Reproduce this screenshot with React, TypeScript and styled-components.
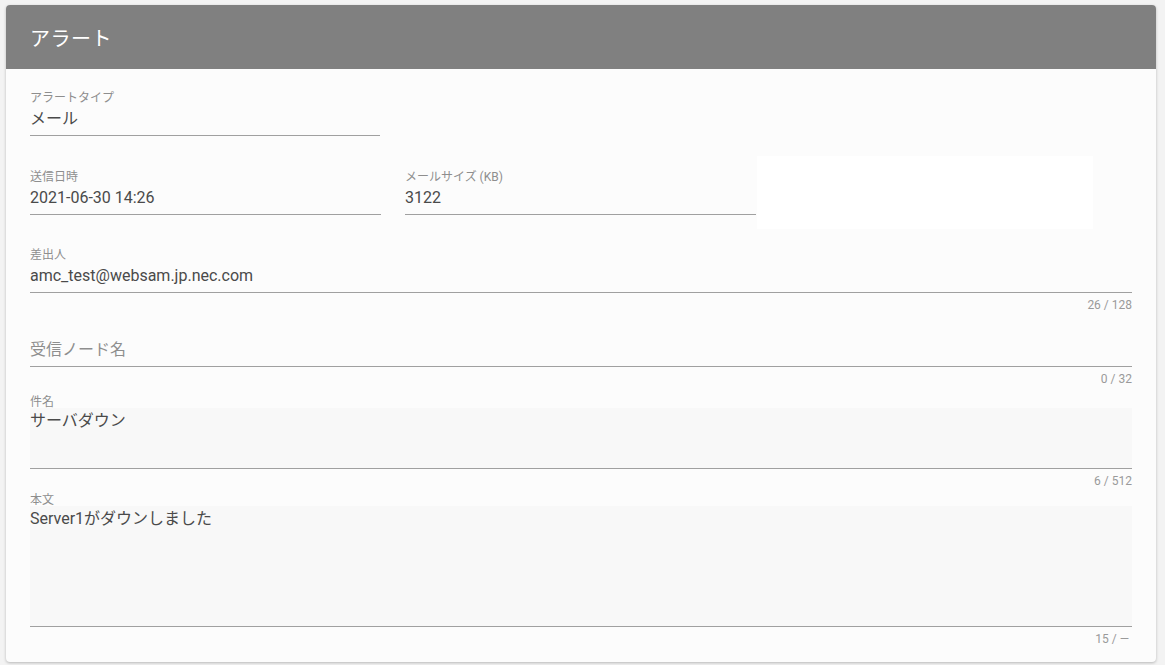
import styled, { createGlobalStyle } from "styled-components"

const GlobalStyle = createGlobalStyle`
    html, body {
        margin: 0;
        padding: 0;
        background: #f3f3f3;
        font-family: Roboto, "Noto Sans CJK JP", "Noto Sans", sans-serif;
    }
`

const Page = styled.div`
    padding: 5px 9px 3px 6px;
`

const Card = styled.section`
    background: #fcfcfc;
    border-radius: 4px;
    box-shadow: 0 1px 3px rgba(0, 0, 0, 0.25);
    overflow: hidden;
`

const Header = styled.header`
    height: 64px;
    background: #808080;
    color: #ffffff;
    display: flex;
    align-items: center;
    padding: 0 24px;
    font-size: 20px;
    font-weight: 400;
    letter-spacing: 0.5px;
`

const Body = styled.div`
    padding: 21px 24px 16px;
    display: flex;
    flex-direction: column;
`

const Row = styled.div`
    display: grid;
    grid-template-columns: 351px 351px 313px;
    column-gap: 24px;
    align-items: start;
`

const Field = styled.div<{ $width?: number; $hint: number }>`
    display: flex;
    flex-direction: column;
    width: ${p => (p.$width ? `${p.$width}px` : "auto")};
    padding-bottom: ${p => p.$hint}px;
`

const Label = styled.label<{ $area?: boolean }>`
    font-size: 12px;
    line-height: 16px;
    height: 16px;
    color: #8e8e8e;
    margin-bottom: ${p => (p.$area ? "-2px" : "0")};
    position: relative;
    z-index: 1;
`

const Control = styled.div<{ $rows?: number; $empty?: boolean }>`
    font-size: 16px;
    line-height: 24px;
    padding: 1px 0 4px;
    height: ${p => (p.$rows ? `${p.$rows}px` : "24px")};
    color: ${p => (p.$empty ? "#8e8e8e" : "#4a4a4a")};
    background: ${p => (p.$rows ? "#f8f8f8" : "transparent")};
    border-bottom: 1px solid #a0a0a0;
    white-space: nowrap;
`

const Counter = styled.div<{ $inset?: number }>`
    align-self: flex-end;
    font-size: 12px;
    line-height: 14px;
    color: #9a9a9a;
    margin-top: 5px;
    margin-right: ${p => p.$inset ?? 0}px;
`

// white patch sitting right of the size field
const Blank = styled.div`
    margin: -13px 0 0 -23px;
    height: 73px;
    background: #ffffff;
`

export default function App() {
    return (
        <Page>
            <GlobalStyle />
            <Card>
                <Header>アラート</Header>
                <Body>
                    <Field $width={350} $hint={33}>
                        <Label>アラートタイプ</Label>
                        <Control>メール</Control>
                    </Field>
                    <Row>
                        <Field $hint={32}>
                            <Label>送信日時</Label>
                            <Control>2021-06-30 14:26</Control>
                        </Field>
                        <Field $hint={32}>
                            <Label>メールサイズ (KB)</Label>
                            <Control>3122</Control>
                        </Field>
                        <Blank />
                    </Row>
                    <Field $hint={9}>
                        <Label>差出人</Label>
                        <Control>amc_test@websam.jp.nec.com</Control>
                        <Counter>26 / 128</Counter>
                    </Field>
                    <Field $hint={8}>
                        <Label />
                        <Control $empty>受信ノード名</Control>
                        <Counter>0 / 32</Counter>
                    </Field>
                    <Field $hint={4}>
                        <Label $area>件名</Label>
                        <Control $rows={55}>サーバダウン</Control>
                        <Counter>6 / 512</Counter>
                    </Field>
                    <Field $hint={0}>
                        <Label $area>本文</Label>
                        <Control $rows={115}>Server1がダウンしました</Control>
                        <Counter $inset={3}>15 / —</Counter>
                    </Field>
                </Body>
            </Card>
        </Page>
    )
}
